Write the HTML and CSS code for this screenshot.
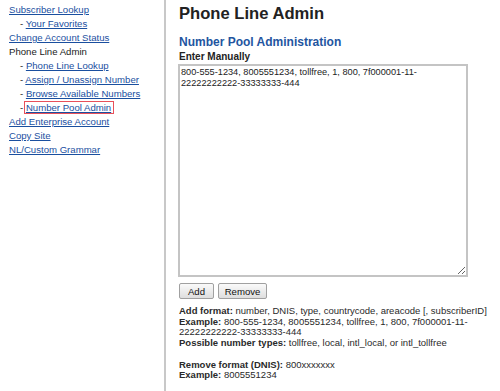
FILE: index.html
```html
<!DOCTYPE HTML>
<html lang="en-US">
	<head>
		<meta charset="UTF-8">
		<title>Phone Line Admin</title>
		<link rel="stylesheet" href="styles.css">
	</head>
	<body>
		<div class="page">
			<div class="sidebar">
				<ul class="menu">
					<li><a href="#">Subscriber Lookup</a></li>
					<li class="sub">- <a href="#">Your Favorites</a></li>
					<li><a href="#">Change Account Status</a></li>
					<li>Phone Line Admin</li>
					<li class="sub">- <a href="#">Phone Line Lookup</a></li>
					<li class="sub">- <a href="#">Assign / Unassign Number</a></li>
					<li class="sub">- <a href="#">Browse Available Numbers</a></li>
					<li class="sub">- <a href="#" class="current">Number Pool Admin</a></li>
					<li><a href="#">Add Enterprise Account</a></li>
					<li><a href="#">Copy Site</a></li>
					<li><a href="#">NL/Custom Grammar</a></li>
				</ul>
			</div>
			<div class="main">
				<h1>Phone Line Admin</h1>
				<h2>Number Pool Administration</h2>
				<label class="label">Enter Manually</label>
				<textarea class="numbers">800-555-1234, 8005551234, tollfree, 1, 800, 7f000001-11-22222222222-33333333-444</textarea>
				<div class="buttons">
					<button class="btn-add">Add</button>
					<button class="btn-remove">Remove</button>
				</div>
				<div class="help">
					<p><b>Add format:</b> number, DNIS, type, countrycode, areacode [, subscriberID]<br>
					<b>Example:</b> 800-555-1234, 8005551234, tollfree, 1, 800, 7f000001-11-<br>22222222222-33333333-444<br>
					<b>Possible number types:</b> tollfree, local, intl_local, or intl_tollfree</p>
					<p><b>Remove format (DNIS):</b> 800xxxxxxx<br>
					<b>Example:</b> 8005551234</p>
				</div>
			</div>
		</div>
	</body>
</html>
```
FILE: styles.css
```css
body {
	margin: 0;
	font-family: "Liberation Sans", Arial, sans-serif;
	font-size: 9.6px;
	color: #222;
	background: #fff;
}
.page {
	display: flex;
	height: 391px;
	overflow: hidden;
}
.sidebar {
	width: 164px;
	flex: none;
	border-right: 2px solid #c8c8c8;
}
.menu {
	list-style: none;
	margin: 3px 0 0 0;
	padding: 0 0 0 9px;
}
.menu li {
	line-height: 14px;
	white-space: nowrap;
}
.menu li.sub {
	padding-left: 11px;
}
.menu a {
	color: #1a4f9f;
	text-decoration: underline;
}
.menu a.current {
	border: 1px solid #e8505a;
	padding: 0 2px 0 1px;
	margin: 0 -3px 0 -2px;
}
.main {
	padding: 0 0 0 13px;
	flex: 1;
}
h1 {
	font-size: 16.6px;
	font-weight: bold;
	margin: 4px 0 0 0;
	line-height: 20px;
	color: #222;
}
h2 {
	font-size: 12px;
	font-weight: bold;
	color: #23559f;
	margin: 11px 0 0 0;
	line-height: 14px;
}
.label {
	display: block;
	font-weight: bold;
	font-size: 10px;
	line-height: 12px;
	margin-top: 2px;
}
.numbers {
	display: block;
	box-sizing: border-box;
	width: 290px;
	height: 213px;
	margin: 1px 0 0 -1px;
	padding: 1px 1px;
	border: 2px solid #c4c4c4;
	font-family: "Liberation Sans", Arial, sans-serif;
	font-size: 9.2px;
	line-height: 11px;
	color: #222;
	resize: both;
	outline: none;
}
.buttons {
	margin-top: 6px;
	display: flex;
	gap: 4px;
}
.buttons button {
	font-family: "Liberation Sans", Arial, sans-serif;
	font-size: 9.6px;
	height: 16px;
	padding: 0;
	border: 1px solid #a0a0a0;
	border-radius: 2px;
	background: linear-gradient(#fafafa, #dedede);
	color: #111;
}
.btn-add {
	width: 35px;
}
.btn-remove {
	width: 49px;
}
.help {
	margin-top: 7px;
	font-size: 9.5px;
	line-height: 10.7px;
	color: #2a2a2a;
}
.help p {
	margin: 0 0 10.7px 0;
}
```
